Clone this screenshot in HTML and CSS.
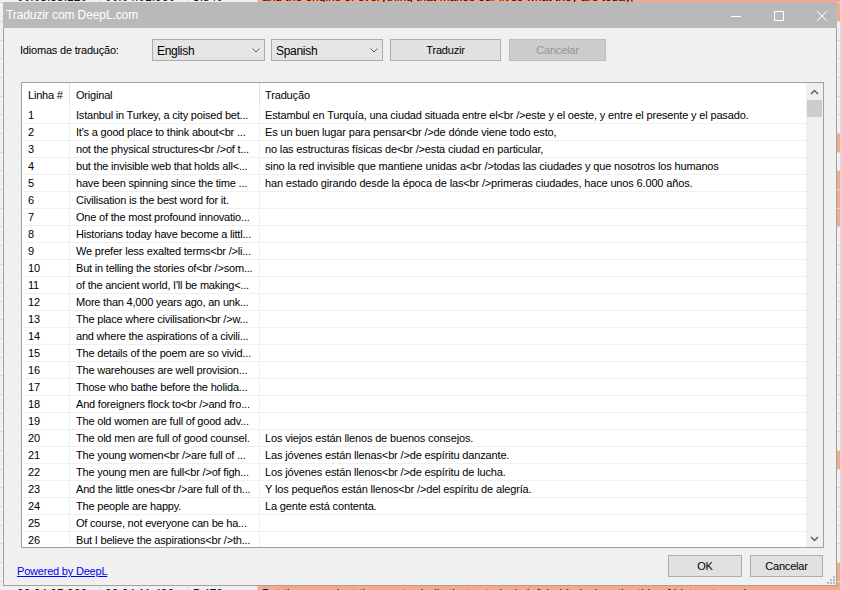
FILE: index.html
```html
<!DOCTYPE html>
<html lang="pt">
<head>
<meta charset="utf-8">
<title>Traduzir com DeepL.com</title>
<link rel="stylesheet" href="styles.css">
</head>
<body>
<div class="desk">
  <div class="bgrow hot first"><div class="c c1">00:03:58.120</div><div class="c c2">00:04:01.960</div><div class="c c3">3.840</div><div class="c c4">and the origins of everything that makes our lives what they are today,</div></div>
  <div class="bgrow hot"><div class="c c1"></div><div class="c c2"></div><div class="c c3"></div><div class="c c4"></div></div>
  <div class="bgrow"><div class="c c1"></div><div class="c c2"></div><div class="c c3"></div><div class="c c4"></div></div>
  <div class="bgrow"><div class="c c1"></div><div class="c c2"></div><div class="c c3"></div><div class="c c4"></div></div>
  <div class="bgrow"><div class="c c1"></div><div class="c c2"></div><div class="c c3"></div><div class="c c4"></div></div>
  <div class="bgrow"><div class="c c1"></div><div class="c c2"></div><div class="c c3"></div><div class="c c4"></div></div>
  <div class="bgrow"><div class="c c1"></div><div class="c c2"></div><div class="c c3"></div><div class="c c4"></div></div>
  <div class="bgrow"><div class="c c1"></div><div class="c c2"></div><div class="c c3"></div><div class="c c4"></div></div>
  <div class="bgrow hot"><div class="c c1"></div><div class="c c2"></div><div class="c c3"></div><div class="c c4"></div></div>
  <div class="bgrow"><div class="c c1"></div><div class="c c2"></div><div class="c c3"></div><div class="c c4"></div></div>
  <div class="bgrow hot"><div class="c c1"></div><div class="c c2"></div><div class="c c3"></div><div class="c c4"></div></div>
  <div class="bgrow hot"><div class="c c1"></div><div class="c c2"></div><div class="c c3"></div><div class="c c4"></div></div>
  <div class="bgrow hot"><div class="c c1"></div><div class="c c2"></div><div class="c c3"></div><div class="c c4"></div></div>
  <div class="bgrow"><div class="c c1"></div><div class="c c2"></div><div class="c c3"></div><div class="c c4"></div></div>
  <div class="bgrow"><div class="c c1"></div><div class="c c2"></div><div class="c c3"></div><div class="c c4"></div></div>
  <div class="bgrow"><div class="c c1"></div><div class="c c2"></div><div class="c c3"></div><div class="c c4"></div></div>
  <div class="bgrow"><div class="c c1"></div><div class="c c2"></div><div class="c c3"></div><div class="c c4"></div></div>
  <div class="bgrow"><div class="c c1"></div><div class="c c2"></div><div class="c c3"></div><div class="c c4"></div></div>
  <div class="bgrow"><div class="c c1"></div><div class="c c2"></div><div class="c c3"></div><div class="c c4"></div></div>
  <div class="bgrow"><div class="c c1"></div><div class="c c2"></div><div class="c c3"></div><div class="c c4"></div></div>
  <div class="bgrow"><div class="c c1"></div><div class="c c2"></div><div class="c c3"></div><div class="c c4"></div></div>
  <div class="bgrow"><div class="c c1"></div><div class="c c2"></div><div class="c c3"></div><div class="c c4"></div></div>
  <div class="bgrow"><div class="c c1"></div><div class="c c2"></div><div class="c c3"></div><div class="c c4"></div></div>
  <div class="bgrow"><div class="c c1"></div><div class="c c2"></div><div class="c c3"></div><div class="c c4"></div></div>
  <div class="bgrow"><div class="c c1"></div><div class="c c2"></div><div class="c c3"></div><div class="c c4"></div></div>
  <div class="bgrow hot"><div class="c c1"></div><div class="c c2"></div><div class="c c3"></div><div class="c c4"></div></div>
  <div class="bgrow"><div class="c c1"></div><div class="c c2"></div><div class="c c3"></div><div class="c c4"></div></div>
  <div class="bgrow"><div class="c c1"></div><div class="c c2"></div><div class="c c3"></div><div class="c c4"></div></div>
  <div class="bgrow"><div class="c c1"></div><div class="c c2"></div><div class="c c3"></div><div class="c c4"></div></div>
  <div class="bgrow"><div class="c c1"></div><div class="c c2"></div><div class="c c3"></div><div class="c c4"></div></div>
  <div class="bgrow"><div class="c c1"></div><div class="c c2"></div><div class="c c3"></div><div class="c c4"></div></div>
  <div class="bgrow hot"><div class="c c1"></div><div class="c c2"></div><div class="c c3"></div><div class="c c4"></div></div>
  <div class="bgrow hot last"><div class="c c1">00:04:05.960</div><div class="c c2">00:04:11.438</div><div class="c c3">5.478</div><div class="c c4">But these are just the empty shells that got &lt;br /&gt; left behind when the tide of history turned.</div></div>
</div>

<div class="dialog">
  <div class="titlebar">
    <span class="title">Traduzir com DeepL.com</span>
    <div class="caption">
      <svg width="10" height="10" viewBox="0 0 10 10"><path d="M0 5.5H10" stroke="#fff" stroke-width="1"/></svg>
      <svg width="10" height="10" viewBox="0 0 10 10"><rect x="0.5" y="0.5" width="9" height="9" fill="none" stroke="#fff" stroke-width="1"/></svg>
      <svg width="10" height="10" viewBox="0 0 10 10"><path d="M0 0L10 10M10 0L0 10" stroke="#fff" stroke-width="1"/></svg>
    </div>
  </div>
  <div class="content">
    <div class="toolbar">
      <span class="label">Idiomas de tradução:</span>
      <div class="combo combo-a"><span>English</span><svg width="8" height="5" viewBox="0 0 8 5"><path d="M0.5 0.5L4 4L7.5 0.5" fill="none" stroke="#606060"/></svg></div>
      <div class="combo combo-b"><span>Spanish</span><svg width="8" height="5" viewBox="0 0 8 5"><path d="M0.5 0.5L4 4L7.5 0.5" fill="none" stroke="#606060"/></svg></div>
      <div class="btn btn-translate">Traduzir</div>
      <div class="btn btn-disabled">Cancelar</div>
    </div>

    <div class="list">
      <div class="list-main">
        <div class="lv-row lv-head"><div class="cell n">Linha #</div><div class="cell o">Original</div><div class="cell t">Tradução</div></div>
        <div class="lv-row"><div class="cell n">1</div><div class="cell o">Istanbul in Turkey, a city poised bet...</div><div class="cell t">Estambul en Turquía, una ciudad situada entre el&lt;br /&gt;este y el oeste, y entre el presente y el pasado.</div></div>
        <div class="lv-row"><div class="cell n">2</div><div class="cell o">It's a good place to think about&lt;br ...</div><div class="cell t">Es un buen lugar para pensar&lt;br /&gt;de dónde viene todo esto,</div></div>
        <div class="lv-row"><div class="cell n">3</div><div class="cell o">not the physical structures&lt;br /&gt;of t...</div><div class="cell t">no las estructuras físicas de&lt;br /&gt;esta ciudad en particular,</div></div>
        <div class="lv-row"><div class="cell n">4</div><div class="cell o">but the invisible web that holds all&lt;...</div><div class="cell t">sino la red invisible que mantiene unidas a&lt;br /&gt;todas las ciudades y que nosotros los humanos</div></div>
        <div class="lv-row"><div class="cell n">5</div><div class="cell o">have been spinning since the time ...</div><div class="cell t">han estado girando desde la época de las&lt;br /&gt;primeras ciudades, hace unos 6.000 años.</div></div>
        <div class="lv-row"><div class="cell n">6</div><div class="cell o">Civilisation is the best word for it.</div><div class="cell t"></div></div>
        <div class="lv-row"><div class="cell n">7</div><div class="cell o">One of the most profound innovatio...</div><div class="cell t"></div></div>
        <div class="lv-row"><div class="cell n">8</div><div class="cell o">Historians today have become a littl...</div><div class="cell t"></div></div>
        <div class="lv-row"><div class="cell n">9</div><div class="cell o">We prefer less exalted terms&lt;br /&gt;li...</div><div class="cell t"></div></div>
        <div class="lv-row"><div class="cell n">10</div><div class="cell o">But in telling the stories of&lt;br /&gt;som...</div><div class="cell t"></div></div>
        <div class="lv-row"><div class="cell n">11</div><div class="cell o">of the ancient world, I'll be making&lt;...</div><div class="cell t"></div></div>
        <div class="lv-row"><div class="cell n">12</div><div class="cell o">More than 4,000 years ago, an unk...</div><div class="cell t"></div></div>
        <div class="lv-row"><div class="cell n">13</div><div class="cell o">The place where civilisation&lt;br /&gt;w...</div><div class="cell t"></div></div>
        <div class="lv-row"><div class="cell n">14</div><div class="cell o">and where the aspirations of a civili...</div><div class="cell t"></div></div>
        <div class="lv-row"><div class="cell n">15</div><div class="cell o">The details of the poem are so vivid...</div><div class="cell t"></div></div>
        <div class="lv-row"><div class="cell n">16</div><div class="cell o">The warehouses are well provision...</div><div class="cell t"></div></div>
        <div class="lv-row"><div class="cell n">17</div><div class="cell o">Those who bathe before the holida...</div><div class="cell t"></div></div>
        <div class="lv-row"><div class="cell n">18</div><div class="cell o">And foreigners flock to&lt;br /&gt;and fro...</div><div class="cell t"></div></div>
        <div class="lv-row"><div class="cell n">19</div><div class="cell o">The old women are full of good adv...</div><div class="cell t"></div></div>
        <div class="lv-row"><div class="cell n">20</div><div class="cell o">The old men are full of good counsel.</div><div class="cell t">Los viejos están llenos de buenos consejos.</div></div>
        <div class="lv-row"><div class="cell n">21</div><div class="cell o">The young women&lt;br /&gt;are full of ...</div><div class="cell t">Las jóvenes están llenas&lt;br /&gt;de espíritu danzante.</div></div>
        <div class="lv-row"><div class="cell n">22</div><div class="cell o">The young men are full&lt;br /&gt;of figh...</div><div class="cell t">Los jóvenes están llenos&lt;br /&gt;de espíritu de lucha.</div></div>
        <div class="lv-row"><div class="cell n">23</div><div class="cell o">And the little ones&lt;br /&gt;are full of th...</div><div class="cell t">Y los pequeños están llenos&lt;br /&gt;del espíritu de alegría.</div></div>
        <div class="lv-row"><div class="cell n">24</div><div class="cell o">The people are happy.</div><div class="cell t">La gente está contenta.</div></div>
        <div class="lv-row"><div class="cell n">25</div><div class="cell o">Of course, not everyone can be ha...</div><div class="cell t"></div></div>
        <div class="lv-row"><div class="cell n">26</div><div class="cell o">But I believe the aspirations&lt;br /&gt;th...</div><div class="cell t"></div></div>
      </div>
      <div class="vscroll">
        <div class="sarrow"><svg width="9" height="6" viewBox="0 0 9 6"><path d="M1 5L4.5 1.5L8 5" fill="none" stroke="#606060" stroke-width="1.5"/></svg></div>
        <div class="thumb"></div>
        <div class="track"></div>
        <div class="sarrow"><svg width="9" height="6" viewBox="0 0 9 6"><path d="M1 1L4.5 4.5L8 1" fill="none" stroke="#606060" stroke-width="1.5"/></svg></div>
      </div>
    </div>

    <div class="footer">
      <a class="link" href="#">Powered by DeepL</a>
      <div class="btn btn-ok">OK</div>
      <div class="btn btn-cancel">Cancelar</div>
    </div>
    <div class="grip">
      <svg width="8" height="8" viewBox="0 0 8 8" fill="#bdbdbd"><rect x="6" y="0" width="2" height="2"/><rect x="3" y="3" width="2" height="2"/><rect x="6" y="3" width="2" height="2"/><rect x="0" y="6" width="2" height="2"/><rect x="3" y="6" width="2" height="2"/><rect x="6" y="6" width="2" height="2"/></svg>
    </div>
  </div>
</div>
</body>
</html>
```

FILE: styles.css
```css
* { box-sizing: border-box; }

html, body {
  margin: 0;
  padding: 0;
}

body {
  width: 841px;
  height: 590px;
  overflow: hidden;
  position: relative;
  background: #f0f0f0;
  font-family: "Liberation Sans", Arial, sans-serif;
  font-size: 11px;
  color: #000;
}

/* background application behind the dialog */
.desk {
  margin-top: -15.33px;
  display: flex;
  flex-direction: column;
}

.bgrow {
  height: 18.67px;
  flex: none;
  display: grid;
  grid-template-columns: 100px 88px 70px 1fr;
  border-bottom: 1px solid #dadada;
  font-size: 12px;
  line-height: 17px;
  color: #111;
}

.bgrow .c {
  border-right: 1px solid #dadada;
  white-space: nowrap;
  overflow: hidden;
}

.bgrow .c1 { padding-left: 17px; }
.bgrow .c2 { padding-left: 5px; }
.bgrow .c3 { padding-left: 5px; }
.bgrow .c4 { padding-left: 4px; }
.bgrow.hot .c4 { background: #f4a98b; }
.bgrow.first .c { padding-top: 4px; }
.bgrow.last .c { padding-top: 4px; }

/* dialog window */
.dialog {
  position: absolute;
  left: 3px;
  top: 2px;
  width: 834px;
  height: 584px;
  background: #f0f0f0;
  border: 1px solid #a2a2a2;
  border-top: none;
  display: flex;
  flex-direction: column;
}

.titlebar {
  height: 26px;
  flex: none;
  margin: 0 -1px;
  background: #b9b9b9;
  display: flex;
  align-items: center;
  padding-left: 3px;
}

.title {
  font-size: 12px;
  color: #fff;
  letter-spacing: -0.1px;
  flex: 1;
  padding-bottom: 1px;
}

.caption {
  display: flex;
  align-items: center;
  gap: 33px;
  margin-right: 10px;
  padding-top: 1px;
}

.caption svg { display: block; }

.content {
  flex: 1;
  display: flex;
  flex-direction: column;
  position: relative;
  letter-spacing: -0.2px;
}

.toolbar {
  display: flex;
  align-items: center;
  height: 22px;
  margin-top: 11px;
  padding-left: 16px;
}

.label {
  width: 132px;
  flex: none;
}

.combo {
  height: 22px;
  background: #e5e5e5;
  border: 1px solid #acacac;
  display: flex;
  align-items: center;
  justify-content: space-between;
  padding: 0 4px 0 4px;
  font-size: 12px;
  letter-spacing: -0.3px;
}

.combo span { padding-top: 2px; }
.combo svg { display: block; margin-top: 1px; }

.combo-a { width: 113px; margin-right: 6px; }
.combo-b { width: 112px; margin-right: 7px; }

.btn {
  height: 22px;
  background: #e1e1e1;
  border: 1px solid #adadad;
  display: flex;
  align-items: center;
  justify-content: center;
  font-size: 11px;
}

.btn-translate { width: 111px; margin-right: 8px; }

.btn-disabled {
  width: 97px;
  background: #cccccc;
  border-color: #bfbfbf;
  color: #979797;
}

/* list view */
.list {
  margin: 21px 0 0 17px;
  width: 803px;
  height: 466px;
  flex: none;
  border: 1px solid #a0a0a0;
  background: #fff;
  display: flex;
  overflow: hidden;
}

.list-main {
  flex: 1;
  display: flex;
  flex-direction: column;
  overflow: hidden;
}

.lv-row {
  display: grid;
  grid-template-columns: 48px 190px 1fr;
  height: 17px;
  flex: none;
  border-bottom: 1px solid #f0f0f0;
  line-height: 16px;
}

.lv-row .cell {
  white-space: nowrap;
  overflow: hidden;
  border-right: 1px solid #f0f0f0;
}

.lv-row .cell.t { border-right: none; }

.cell.n { padding-left: 6px; }
.cell.o { padding-left: 6px; }
.cell.t { padding-left: 5px; letter-spacing: -0.15px; }

.lv-row.lv-head {
  height: 24px;
  line-height: 24px;
  border-bottom: none;
}

.lv-head .cell { border-right-color: #e5e5e5; }

.vscroll {
  width: 17px;
  flex: none;
  background: #f0f0f0;
  display: flex;
  flex-direction: column;
}

.sarrow {
  height: 17px;
  flex: none;
  display: flex;
  align-items: center;
  justify-content: center;
}

.sarrow svg { display: block; }

.thumb {
  height: 17px;
  flex: none;
  margin: 0 1px;
  background: #cdcdcd;
}

.track { flex: 1; }

/* footer */
.footer {
  display: flex;
  align-items: flex-start;
  margin-top: 7px;
  padding-left: 13px;
}

.link {
  color: #0000ff;
  text-decoration: underline;
  line-height: 13px;
  margin-top: 10px;
  flex: 1;
}

.btn-ok { width: 74px; margin-right: 8px; }
.btn-cancel { width: 73px; margin-right: 13px; }

.grip {
  position: absolute;
  right: 1px;
  bottom: 1px;
}

.grip svg { display: block; }
```
